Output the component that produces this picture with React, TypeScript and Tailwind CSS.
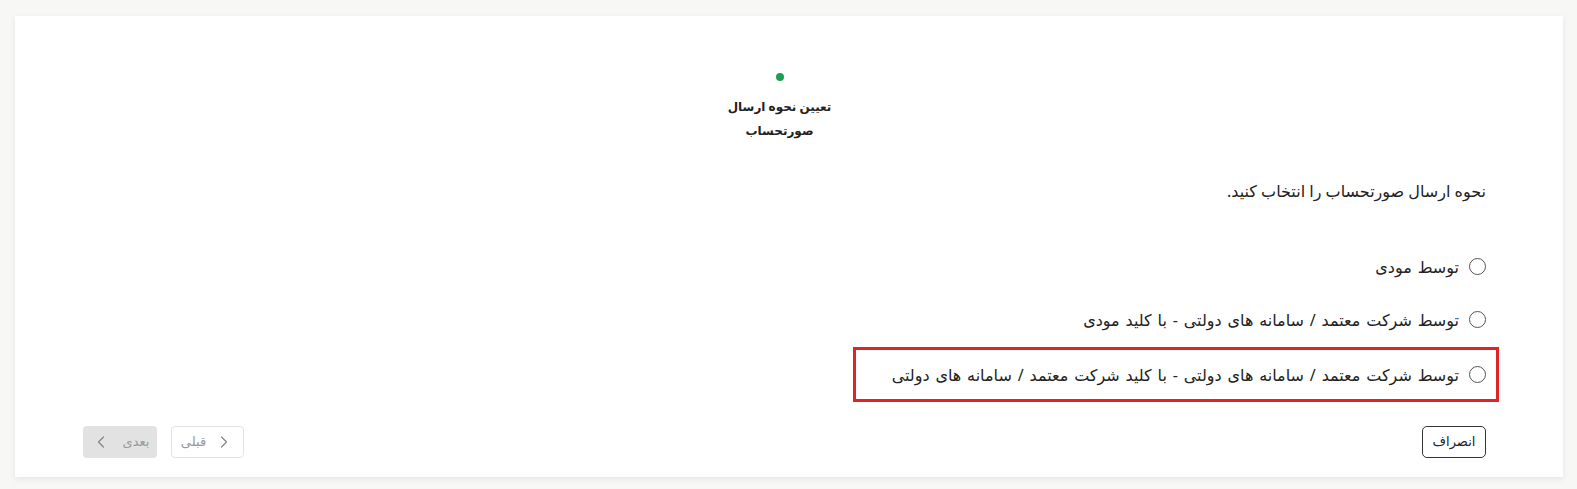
import React from "react";
import { ChevronLeft, ChevronRight } from "lucide-react";

const options = [
  "توسط مودی",
  "توسط شرکت معتمد / سامانه های دولتی - با کلید مودی",
  "توسط شرکت معتمد / سامانه های دولتی - با کلید شرکت معتمد / سامانه های دولتی",
];

function Radio() {
  return (
    <span className="w-[17px] h-[17px] rounded-full border-[1.5px] border-[#555] bg-white shrink-0" />
  );
}

export default function App() {
  return (
    <div
      className="h-screen w-full overflow-hidden bg-[#f7f8f6] pt-4 pl-[15px] pr-[14px]"
      style={{ fontFamily: '"Noto Sans", "DejaVu Sans", sans-serif' }}
    >
      <div
        dir="rtl"
        className="bg-white h-[461px] shadow-[0_2px_6px_rgba(0,0,0,0.08)] pr-[77px] pl-[68px] flex flex-col"
      >
        {/* stepper */}
        <div className="flex flex-col items-center pt-[57px] mr-[10px]">
          <span className="w-2 h-2 rounded-full bg-[#1f9d55]" />
          <div className="mt-[14px] text-[12px] font-bold text-[#222] leading-6 text-center">
            <div>تعیین نحوه ارسال</div>
            <div>صورتحساب</div>
          </div>
        </div>

        <p className="mt-[36px] text-[16px] text-[#222] leading-6">
          نحوه ارسال صورتحساب را انتخاب کنید.
        </p>

        <div className="mt-[37px] flex flex-col">
          {options.map((o, i) =>
            i === 2 ? (
              <div
                key={o}
                className="mt-[1px] -mr-[13px] w-[646px] h-[55px] border-[3px] border-[#e02424] flex items-center gap-2.5 pr-[10px]"
              >
                <Radio />
                <span className="text-[16px] text-[#222] [word-spacing:1.7px]">{o}</span>
              </div>
            ) : (
              <div key={o} className="h-[53px] flex items-center gap-2.5">
                <Radio />
                <span className="text-[16px] text-[#222] [word-spacing:1.7px]">{o}</span>
              </div>
            )
          )}
        </div>

        <div className="mt-[24px] flex items-center justify-between">
          <button className="h-[32px] w-[64px] rounded-[5px] border border-[#333] text-[13px] text-[#222] bg-white">
            انصراف
          </button>
          <div className="flex items-center gap-[14px]">
            <button className="h-[32px] w-[73px] rounded-[4px] border border-[#e2e2e2] bg-white text-[#999] text-[13px] flex items-center justify-center gap-2">
              <ChevronRight size={20} strokeWidth={1.5} className="text-[#888]" />
              <span>قبلی</span>
            </button>
            <button className="h-[32px] w-[74px] rounded-[4px] bg-[#e2e2e2] text-[#9a9a9a] text-[13px] flex items-center justify-center gap-3">
              <span>بعدی</span>
              <ChevronLeft size={20} strokeWidth={1.5} className="text-[#888]" />
            </button>
          </div>
        </div>
      </div>
    </div>
  );
}
